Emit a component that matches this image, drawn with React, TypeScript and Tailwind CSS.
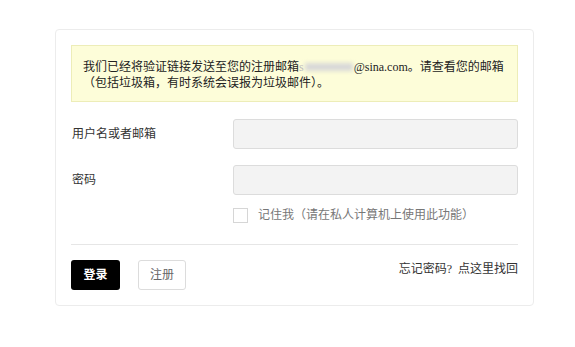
import React from "react";

export default function App() {
  return (
    <div
      className="w-[575px] h-[347px] bg-white pt-[29px] pl-[55px]"
      style={{ fontFamily: '"Liberation Serif", "Noto Sans CJK SC", serif' }}
    >
      <div className="w-[479px] rounded-[4px] border border-[#ececec] bg-white px-[15px] pt-[15px] pb-[15px]">
        <div className="border border-[#ededb8] bg-[#fdfdd9] pl-[11px] pr-[8px] pt-[13px] pb-[10px] text-[12px] leading-[16px] text-[#222]">
          <div className="flex items-center whitespace-nowrap">
            <span>我们已经将验证链接发送至您的注册邮箱</span>
            <span className="text-[#bbb]">s</span>
            <span className="inline-block h-[8px] w-[48px] bg-[#d8d8d8] blur-[2px] mx-[1px]" />
            <span>@sina.com。请查看您的邮箱</span>
          </div>
          <div>（包括垃圾箱，有时系统会误报为垃圾邮件）。</div>
        </div>

        <div className="mt-[17px] flex items-center">
          <label className="w-[162px] pl-[1px] text-[12px] text-[#333]">用户名或者邮箱</label>
          <input className="h-[30px] flex-1 rounded-[3px] border border-[#dcdcdc] bg-[#f3f3f3] outline-none" />
        </div>
        <div className="mt-[16px] flex items-center">
          <label className="w-[162px] pl-[1px] text-[12px] text-[#333]">密码</label>
          <input type="password" className="h-[30px] flex-1 rounded-[3px] border border-[#dcdcdc] bg-[#f3f3f3] outline-none" />
        </div>
        <div className="mt-[11px] flex items-center pl-[162px]">
          <span className="inline-block h-[15px] w-[15px] border border-[#d6d6d6] bg-white" />
          <span className="ml-[10px] text-[12px] text-[#777]">记住我（请在私人计算机上使用此功能）</span>
        </div>

        <div className="mt-[20px] border-t border-[#e6e6e6]" />

        <div className="mt-[15px] flex items-start justify-between">
          <div className="flex gap-[18px]">
            <button className="h-[30px] w-[49px] rounded-[3px] bg-black text-[12px] font-bold text-white">登录</button>
            <button className="h-[30px] w-[48px] rounded-[3px] border border-[#dcdcdc] bg-white text-[12px] text-[#666]">注册</button>
          </div>
          <div className="mt-[1px] text-[12px] leading-[16px] text-[#333]">
            忘记密码?<span className="ml-[6px]">点这里找回</span>
          </div>
        </div>
      </div>
    </div>
  );
}
